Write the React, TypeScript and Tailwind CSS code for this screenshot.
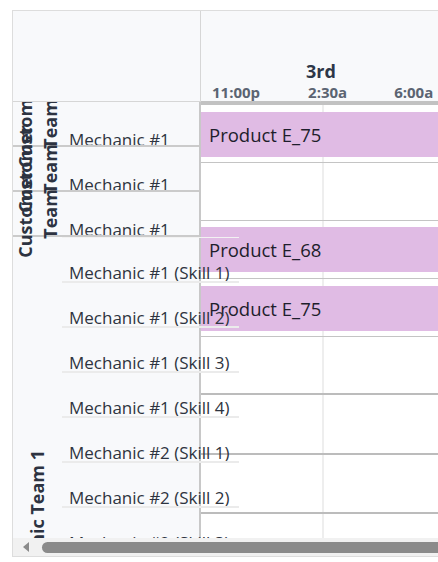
import React from 'react';

// Resource rows inside the big "Mechanic Team 1" group
const mechanicRows = [
  'Mechanic #1 (Skill 1)',
  'Mechanic #1 (Skill 2)',
  'Mechanic #1 (Skill 3)',
  'Mechanic #1 (Skill 4)',
  'Mechanic #2 (Skill 1)',
  'Mechanic #2 (Skill 2)',
  'Mechanic #2 (Skill 3)',
  'Mechanic #2 (Skill 4)',
  'Mechanic #3 (Skill 1)',
  'Mechanic #3 (Skill 2)',
  'Mechanic #3 (Skill 3)',
  'Mechanic #3 (Skill 4)',
  'Mechanic #4 (Skill 1)',
];

const EventBar: React.FC<{ label: string }> = ({ label }) => (
  <div className="flex h-[45px] w-full items-center bg-[#e0bbe4] pl-[8px] text-[18.5px] whitespace-nowrap text-[#1e1e2c]">
    {label}
  </div>
);

const CustomerGroup: React.FC = () => (
  <div className="flex h-[45px] shrink-0 border-b-2 border-[#cbcbcb]">
    <div className="flex w-[49px] shrink-0 items-center justify-center">
      <div className="h-min rotate-180 text-center text-[18px] leading-[25px] font-bold text-[#2d3341] [writing-mode:vertical-rl]">
        Customer Team
      </div>
    </div>
    <div className="flex flex-1 flex-col justify-end overflow-hidden pl-[7px]">
      <span className="-mb-[2px] text-[17px] leading-[15px] whitespace-nowrap text-[#2e3440]">Mechanic #1</span>
    </div>
  </div>
);

export default function App() {
  return (
    <div className="h-[562px] w-[438px] overflow-hidden bg-white font-['Open_Sans',sans-serif]">
      <div className="ml-3 mt-2.5 flex h-[547px] w-[440px] flex-col border border-[#dddddd]">
        <div className="flex h-[527px] min-h-0 shrink-0">
          {/* Left: resource area */}
          <div className="relative z-10 flex min-h-0 w-[188px] shrink-0 flex-col">
            <div className="h-[91px] shrink-0 border-r border-b border-[#d6d6d6] bg-[#f8f9fb]" />
            <div className="flex min-h-0 flex-1 flex-col border-r-2 border-[#c8c8c8] bg-[#f8f9fb] [clip-path:inset(0_-80px_0_0)]">
              <CustomerGroup />
              <CustomerGroup />
              <CustomerGroup />
              <div className="flex shrink-0">
                <div className="flex w-[49px] shrink-0 items-center justify-center">
                  <div className="mb-[4px] rotate-180 text-[18px] leading-[25px] font-bold whitespace-nowrap text-[#2d3341] [writing-mode:vertical-rl]">
                    Mechanic Team 1
                  </div>
                </div>
                <div className="flex flex-1 flex-col">
                  <div className="h-px w-[177px] bg-[#f2f2f2]" />
                  {mechanicRows.map((name) => (
                    <div key={name} className="flex h-[45px] flex-col justify-end">
                      <span className="mb-[1px] pl-[7px] text-[17px] leading-[15px] whitespace-nowrap text-[#2e3440]">
                        {name}
                      </span>
                      <div className="h-[2px] w-[177px] bg-[#ebebeb]" />
                    </div>
                  ))}
                </div>
              </div>
            </div>
          </div>

          {/* Right: timeline */}
          <div className="flex min-h-0 flex-1 flex-col overflow-hidden">
            <div className="flex h-[90px] shrink-0 flex-col justify-end bg-[#f8f9fb]">
              <div className="w-[240px] text-center text-[18px] leading-[22px] font-bold text-[#2d3748]">3rd</div>
              <div className="mt-[1px] flex text-[15px] leading-[18px] font-bold text-[#5b6472]">
                <span className="ml-[11px]">11:00p</span>
                <span className="ml-[48px]">2:30a</span>
                <span className="ml-[47px]">6:00a</span>
              </div>
            </div>
            <div className="flex min-h-0 flex-1 flex-col overflow-hidden border-t-4 border-[#c2c2c2] bg-white bg-[linear-gradient(to_right,transparent_121px,#eeeeee_121px,#eeeeee_123px,transparent_123px)]">
              <div className="h-[58px] shrink-0 border-b border-[#c4c4c4] pt-[7px]">
                <EventBar label="Product E_75" />
              </div>
              <div className="h-[58px] shrink-0 border-b border-[#c4c4c4]" />
              <div className="h-[58px] shrink-0 border-b border-[#c4c4c4] pt-[6px]">
                <EventBar label="Product E_68" />
              </div>
              <div className="h-[58px] shrink-0 border-b border-[#c4c4c4] pt-[7px]">
                <EventBar label="Product E_75" />
              </div>
              <div className="h-[58px] shrink-0 border-b-2 border-[#bcbcbc]" />
              <div className="h-[60px] shrink-0 border-b-2 border-[#bcbcbc]" />
              <div className="h-[59px] shrink-0 border-b-2 border-[#bcbcbc]" />
              <div className="h-[58px] shrink-0 border-b-2 border-[#bcbcbc]" />
            </div>
          </div>
        </div>

        {/* Horizontal scrollbar */}
        <div className="flex h-[18px] shrink-0 items-center bg-[#f1f1f1]">
          <div className="ml-[10px] h-0 w-0 border-y-[5px] border-r-[6px] border-y-transparent border-r-[#8a8a8a]" />
          <div className="ml-[13px] h-[11px] flex-1 rounded-full bg-[#8b8b8b]" />
        </div>
      </div>
    </div>
  );
}
